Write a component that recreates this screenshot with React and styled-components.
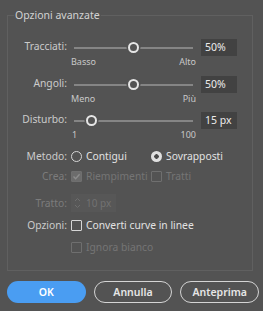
import React from "react";
import styled, { createGlobalStyle } from "styled-components";

const Global = createGlobalStyle`
  html, body { margin: 0; padding: 0; background: #535353; }
  body { font-family: "Noto Sans", "Open Sans", sans-serif; font-size: 10px; color: #d8d8d8; }
  * { box-sizing: border-box; }
`;

const Dialog = styled.div`
  width: 263px;
  height: 311px;
  padding: 8px 4px 0 7px;
  display: flex;
  flex-direction: column;
`;

const Group = styled.fieldset`
  margin: 0 6px 0 0;
  border: 1px solid #606060;
  padding: 17px 0 15px 0;
  min-width: 0;
  display: flex;
  flex-direction: column;
`;

const Legend = styled.legend`
  padding: 0 1px;
  margin-left: 6px;
  font-size: 10.5px;
  color: #d2d2d2;
  line-height: 14px;
`;

const Row = styled.div`
  display: grid;
  grid-template-columns: 59px 1fr;
  column-gap: 4px;
  align-items: center;
  margin-top: ${(p) => p.$mt || 0}px;
  min-height: ${(p) => p.$h || 16}px;
`;

const Label = styled.span`
  text-align: right;
  font-size: 10.3px;
  color: ${(p) => (p.$disabled ? "#7c7c7c" : "#cbcbcb")};
  white-space: nowrap;
`;

const SliderBlock = styled.div`
  display: grid;
  grid-template-columns: 59px 1fr;
  column-gap: 4px;
  margin-bottom: ${(p) => p.$mb || 0}px;
`;

const SliderLine = styled.div`
  display: flex;
  align-items: center;
  height: 17px;
`;

const Track = styled.div`
  position: relative;
  margin-left: 3px;
  width: 119px;
  height: 2px;
  background: #858585;
`;

const Thumb = styled.div`
  position: absolute;
  top: 50%;
  width: 11px;
  height: 11px;
  margin: -5.5px 0 0 -5.5px;
  border-radius: 50%;
  border: 2px solid #e6e6e6;
  background: #535353;
  box-shadow: 0 0 0 1.5px #535353;
`;

const ValueInput = styled.div`
  margin-left: 8px;
  width: 36px;
  height: 17px;
  background: #424242;
  color: #ececec;
  font-size: 10.5px;
  line-height: 17px;
  padding-left: 4px;
`;

const Ticks = styled.div`
  grid-column: 2;
  width: 125px;
  display: flex;
  justify-content: space-between;
  font-size: 9px;
  line-height: 11px;
  color: #c8c8c8;
  padding-left: ${(p) => p.$pl || 0}px;
`;

const Options = styled.div`
  display: flex;
  align-items: center;
`;

const Choice = styled.label`
  display: flex;
  align-items: center;
  gap: 4px;
  width: ${(p) => (p.$w ? p.$w + "px" : "auto")};
  font-size: 10.3px;
  color: ${(p) => (p.$disabled ? "#757575" : "#e2e2e2")};
  white-space: nowrap;
`;

const RadioMark = styled.span`
  width: 11px;
  height: 11px;
  border-radius: 50%;
  flex: none;
  border: ${(p) => (p.$on ? "none" : "1.5px solid #d6d6d6")};
  background: ${(p) =>
    p.$on ? "radial-gradient(circle, #4a4a4a 0 2px, #e0e0e0 2.5px)" : "transparent"};
`;

const Box = styled.span`
  width: 11px;
  height: 11px;
  flex: none;
  border-radius: 1px;
  border: 1px solid ${(p) => (p.$disabled ? "#6f6f6f" : "#d6d6d6")};
  background: ${(p) => (p.$checked ? "#6c6c6c" : "transparent")};
  display: flex;
  align-items: center;
  justify-content: center;
`;

const Spinner = styled.div`
  width: 45px;
  height: 18px;
  background: #575757;
  display: flex;
  align-items: center;
  gap: 5px;
  padding-left: 3px;
  font-size: 10px;
  color: #727272;
`;

const Buttons = styled.div`
  display: flex;
  gap: 8px;
  margin-top: 10px;
`;

const Button = styled.button`
  width: 79px;
  height: 22px;
  border-radius: 11px;
  font-family: inherit;
  font-size: 10.5px;
  font-weight: 600;
  padding: 0;
  cursor: pointer;
  color: ${(p) => (p.$primary ? "#ffffff" : "#e6e6e6")};
  background: ${(p) => (p.$primary ? "#4a9df2" : "transparent")};
  border: ${(p) => (p.$primary ? "none" : "1.5px solid #d4d4d4")};
`;

const Check = () => (
  <svg width="9" height="9" viewBox="0 0 9 9">
    <path d="M1.5 4.6 L3.6 6.7 L7.6 2.2" fill="none" stroke="#8d8d8d" strokeWidth="1.4" />
  </svg>
);

const StepIcon = () => (
  <svg width="7" height="12" viewBox="0 0 7 12">
    <path d="M1 4 L3.5 1.5 L6 4 M1 8 L3.5 10.5 L6 8" fill="none" stroke="#6e6e6e" strokeWidth="1" />
  </svg>
);

function Slider({ label, value, pct, ticks, mb, tickPl }) {
  return (
    <SliderBlock $mb={mb}>
      <Label>{label}</Label>
      <SliderLine>
        <Track>
          <Thumb style={{ left: `${pct}%` }} />
        </Track>
        <ValueInput>{value}</ValueInput>
      </SliderLine>
      <Ticks $pl={tickPl}>
        <span>{ticks[0]}</span>
        <span>{ticks[1]}</span>
      </Ticks>
    </SliderBlock>
  );
}

export default function App() {
  return (
    <>
      <Global />
      <Dialog>
        <Group>
          <Legend>Opzioni avanzate</Legend>
          <Slider label="Tracciati:" value="50%" pct={50} ticks={["Basso", "Alto"]} mb={9} />
          <Slider label="Angoli:" value="50%" pct={50} ticks={["Meno", "Più"]} mb={8} />
          <Slider label="Disturbo:" value="15 px" pct={15} ticks={["1", "100"]} tickPl={1} />
          <Row $mt={8}>
            <Label>Metodo:</Label>
            <Options>
              <Choice $w={80}>
                <RadioMark />
                Contigui
              </Choice>
              <Choice>
                <RadioMark $on />
                Sovrapposti
              </Choice>
            </Options>
          </Row>
          <Row $mt={4}>
            <Label $disabled>Crea:</Label>
            <Options>
              <Choice $w={80} $disabled>
                <Box $disabled $checked>
                  <Check />
                </Box>
                Riempimenti
              </Choice>
              <Choice $disabled>
                <Box $disabled />
                Tratti
              </Choice>
            </Options>
          </Row>
          <Row $mt={10} $h={18}>
            <Label $disabled>Tratto:</Label>
            <Spinner>
              <StepIcon />
              10 px
            </Spinner>
          </Row>
          <Row $mt={5}>
            <Label>Opzioni:</Label>
            <Choice>
              <Box />
              Converti curve in linee
            </Choice>
          </Row>
          <Row $mt={6}>
            <span />
            <Choice $disabled>
              <Box $disabled />
              Ignora bianco
            </Choice>
          </Row>
        </Group>
        <Buttons>
          <Button $primary>OK</Button>
          <Button>Annulla</Button>
          <Button>Anteprima</Button>
        </Buttons>
      </Dialog>
    </>
  );
}
